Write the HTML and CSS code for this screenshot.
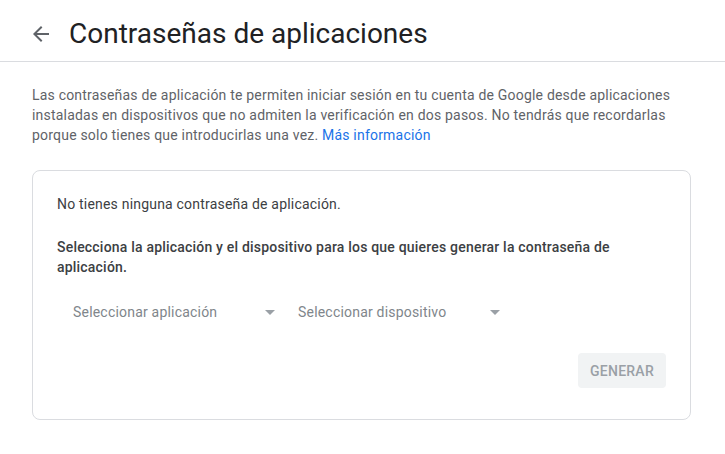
FILE: index.html
```html
<!DOCTYPE html>
<html lang="es">
<head>
<meta charset="utf-8">
<title>Contraseñas de aplicaciones</title>
<link rel="stylesheet" href="styles.css">
</head>
<body>
<header class="header">
  <span class="back">
    <svg width="24" height="24" viewBox="0 0 24 24"><path fill="#5f6368" d="M20 11H7.830l5.59-5.59L12 4l-8 8 8 8 1.41-1.41L7.830 13H20v-2z"/></svg>
  </span>
  <h1 class="title">Contraseñas de aplicaciones</h1>
</header>
<main class="main">
  <p class="intro">Las contraseñas de aplicación te permiten iniciar sesión en tu cuenta de Google desde aplicaciones instaladas en dispositivos que no admiten la verificación en dos pasos. No tendrás que recordarlas porque solo tienes que introducirlas una vez. <a class="link" href="#">Más información</a></p>
  <section class="card">
    <p class="empty">No tienes ninguna contraseña de aplicación.</p>
    <p class="prompt">Selecciona la aplicación y el dispositivo para los que quieres generar la contraseña de aplicación.</p>
    <div class="selects">
      <div class="select"><span>Seleccionar aplicación</span><span class="caret"></span></div>
      <div class="select"><span>Seleccionar dispositivo</span><span class="caret"></span></div>
    </div>
    <div class="actions">
      <button class="btn" disabled>GENERAR</button>
    </div>
  </section>
</main>
</body>
</html>
```
FILE: styles.css
```css
* { box-sizing: border-box; }
body {
  margin: 0;
  font-family: Roboto, "Liberation Sans", Arial, sans-serif;
  background: #fff;
  color: #202124;
}
.header {
  height: 62px;
  border-bottom: 1px solid #dadce0;
  display: flex;
  align-items: center;
  padding: 0 0 0 29px;
}
.back {
  width: 24px;
  height: 24px;
  display: flex;
  margin-top: 6px;
}
.title {
  margin: 6px 0 0 16px;
  font-size: 28px;
  font-weight: 400;
  line-height: 36px;
  color: #202124;
}
.main {
  padding: 23px 34px 0 32px;
}
.intro {
  margin: 0;
  font-size: 14px;
  line-height: 20px;
  letter-spacing: 0.2px;
  color: #5f6368;
  max-width: 661px;
}
.link {
  color: #1a73e8;
  text-decoration: none;
}
.card {
  margin-top: 25px;
  border: 1px solid #dadce0;
  border-radius: 8px;
  padding: 23px 24px 31px 24px;
}
.empty {
  margin: 0;
  font-size: 14px;
  line-height: 20px;
  letter-spacing: 0.2px;
  color: #3c4043;
}
.prompt {
  margin: 23px 0 0 0;
  font-size: 14px;
  line-height: 20px;
  letter-spacing: 0.2px;
  font-weight: 500;
  color: #3c4043;
}
.selects {
  display: flex;
  margin-top: 25px;
}
.select {
  width: 225px;
  height: 20px;
  display: flex;
  align-items: center;
  justify-content: space-between;
  padding: 0 7px 0 16px;
  font-size: 14px;
  line-height: 20px;
  letter-spacing: 0.2px;
  color: #80868b;
}
.caret {
  width: 0;
  height: 0;
  border-left: 5px solid transparent;
  border-right: 5px solid transparent;
  border-top: 5px solid #9aa0a6;
}
.actions {
  display: flex;
  justify-content: flex-end;
  margin-top: 31px;
}
.btn {
  width: 88px;
  height: 35px;
  border: none;
  border-radius: 4px;
  background: #f1f3f4;
  color: #9aa0a6;
  font-family: Roboto, "Liberation Sans", Arial, sans-serif;
  font-size: 14px;
  font-weight: 500;
  letter-spacing: 0.25px;
  padding: 0;
}
```
